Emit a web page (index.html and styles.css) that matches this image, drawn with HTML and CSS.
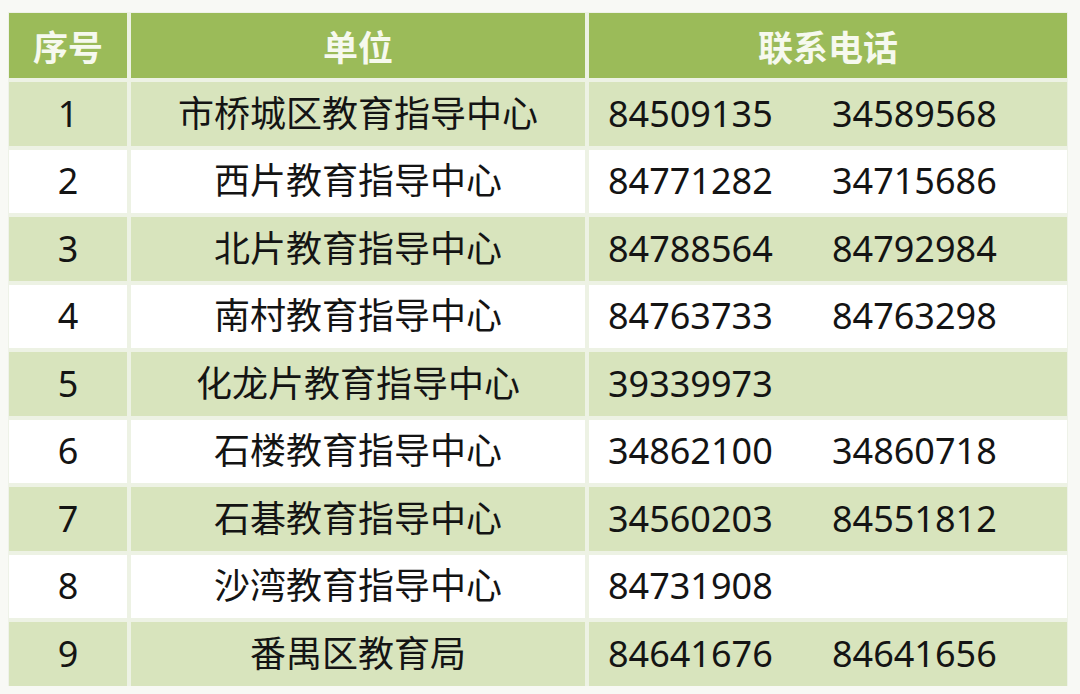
FILE: index.html
```html
<!DOCTYPE html>
<html lang="zh">
<head>
<meta charset="utf-8">
<title>联系电话</title>
<link rel="stylesheet" href="styles.css">
</head>
<body>
<div class="table">
  <div class="cell head">序号</div>
  <div class="cell head">单位</div>
  <div class="cell head">联系电话</div>

  <div class="cell odd">1</div>
  <div class="cell odd">市桥城区教育指导中心</div>
  <div class="cell odd phones"><span class="ph">84509135</span><span class="ph">34589568</span></div>

  <div class="cell">2</div>
  <div class="cell">西片教育指导中心</div>
  <div class="cell phones"><span class="ph">84771282</span><span class="ph">34715686</span></div>

  <div class="cell odd">3</div>
  <div class="cell odd">北片教育指导中心</div>
  <div class="cell odd phones"><span class="ph">84788564</span><span class="ph">84792984</span></div>

  <div class="cell">4</div>
  <div class="cell">南村教育指导中心</div>
  <div class="cell phones"><span class="ph">84763733</span><span class="ph">84763298</span></div>

  <div class="cell odd">5</div>
  <div class="cell odd">化龙片教育指导中心</div>
  <div class="cell odd phones"><span class="ph">39339973</span></div>

  <div class="cell">6</div>
  <div class="cell">石楼教育指导中心</div>
  <div class="cell phones"><span class="ph">34862100</span><span class="ph">34860718</span></div>

  <div class="cell odd">7</div>
  <div class="cell odd">石碁教育指导中心</div>
  <div class="cell odd phones"><span class="ph">34560203</span><span class="ph">84551812</span></div>

  <div class="cell">8</div>
  <div class="cell">沙湾教育指导中心</div>
  <div class="cell phones"><span class="ph">84731908</span></div>

  <div class="cell odd">9</div>
  <div class="cell odd">番禺区教育局</div>
  <div class="cell odd phones"><span class="ph">84641676</span><span class="ph">84641656</span></div>
</div>
</body>
</html>
```

FILE: styles.css
```css
html, body {
  margin: 0;
  padding: 0;
  background: #f8f9f5;
}

body {
  padding: 13px 0 0 9px;
  font-family: "Noto Sans", "Noto Sans CJK SC", sans-serif;
}

.table {
  display: grid;
  grid-template-columns: 118px 454px 478px;
  grid-template-rows: 65px repeat(9, 63.5px);
  gap: 4px;
  width: 1058px;
  background: #edf2e4;
  outline: 1px solid #eef2e8;
}

.cell {
  display: flex;
  align-items: center;
  justify-content: center;
  background: #ffffff;
  color: #141414;
  font-size: 36px;
  line-height: 1;
  white-space: nowrap;
}

.cell.odd {
  background: #d8e4bd;
}

.cell.head {
  background: #9bbb59;
  color: #f6f9ee;
  font-weight: 700;
  font-family: "Noto Sans CJK SC", sans-serif;
  font-size: 35px;
}

.cell.phones {
  justify-content: flex-start;
  padding-left: 19px;
}

.ph {
  width: 224px;
}
```
